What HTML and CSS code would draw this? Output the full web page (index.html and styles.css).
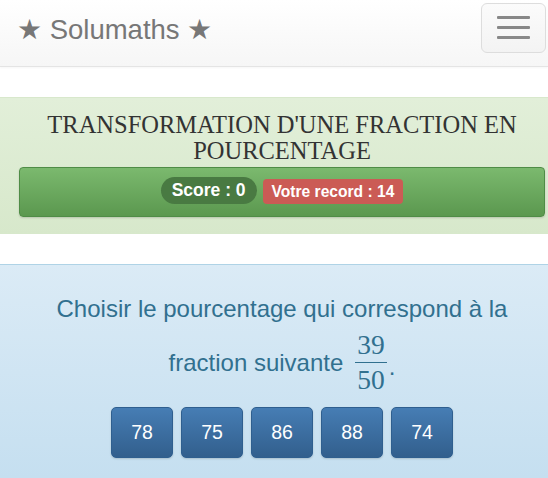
FILE: index.html
```html
<!DOCTYPE html>
<html lang="fr">
<head>
<meta charset="utf-8">
<title>Solumaths</title>
<link rel="stylesheet" href="styles.css">
</head>
<body>
<nav class="navbar">
  <span class="brand">★ Solumaths ★</span>
  <button class="toggle" type="button" aria-label="Menu">
    <span class="bar"></span><span class="bar"></span><span class="bar"></span>
  </button>
</nav>
<section class="game">
  <h1 class="title">TRANSFORMATION D'UNE FRACTION EN POURCENTAGE</h1>
  <div class="scorebar">
    <span class="score">Score : 0</span>
    <span class="record">Votre record : 14</span>
  </div>
</section>
<section class="question">
  <p class="prompt">Choisir le pourcentage qui correspond à la</p>
  <p class="prompt line2">fraction suivante <span class="frac"><span class="num">39</span><span class="den">50</span></span><span class="dot">.</span></p>
  <div class="answers">
    <button class="ans" type="button">78</button>
    <button class="ans" type="button">75</button>
    <button class="ans" type="button">86</button>
    <button class="ans" type="button">88</button>
    <button class="ans" type="button">74</button>
  </div>
</section>
</body>
</html>
```
FILE: styles.css
```css
html, body {
  margin: 0;
  padding: 0;
  height: 100%;
}
body {
  font-family: "Liberation Sans", Arial, sans-serif;
  background: #fff;
  display: flex;
  flex-direction: column;
}
.navbar {
  height: 66px;
  flex: none;
  border-bottom: 1px solid #e4e4e4;
  background: linear-gradient(#ffffff, #f6f6f6);
  display: flex;
  align-items: center;
  justify-content: space-between;
  padding: 0 2px 0 17px;
  box-shadow: 0 1px 2px rgba(0,0,0,0.04);
}
.brand {
  font-size: 27.5px;
  color: #777;
  margin-top: -7px;
}
.toggle {
  width: 65px;
  height: 50px;
  margin-top: -11px;
  border: 1px solid #ddd;
  border-radius: 6px;
  background: linear-gradient(#fbfbfb, #f3f3f3);
  display: flex;
  flex-direction: column;
  align-items: center;
  justify-content: center;
  gap: 7px;
  padding: 0;
}
.bar {
  display: block;
  width: 33px;
  height: 3px;
  border-radius: 1px;
  background: #888;
}
.game {
  flex: none;
  margin-top: 30px;
  background: linear-gradient(#e2efd9, #d7e8cb);
  border-top: 1px solid #d8e8cc;
  padding: 14px 3px 17px 19px;
}
.title {
  margin: 0 0 3px;
  font-family: "Liberation Serif", "Times New Roman", serif;
  font-weight: normal;
  font-size: 24.5px;
  line-height: 26px;
  color: #333;
  text-align: center;
  padding: 0 10px;
}
.scorebar {
  height: 48px;
  border: 1px solid #4f8c46;
  border-radius: 4px;
  background: linear-gradient(#7bb96e, #5b984f);
  box-shadow: 0 1px 2px rgba(0,0,0,0.15);
  display: flex;
  align-items: center;
  justify-content: center;
  gap: 6px;
}
.score {
  background: #497a42;
  color: #fff;
  font-weight: bold;
  font-size: 17.5px;
  line-height: 27px;
  padding: 0 11px;
  border-radius: 14px;
  margin-top: -3px;
}
.record {
  background: #cb5b55;
  color: #fff;
  font-weight: bold;
  font-size: 15.6px;
  line-height: 25px;
  padding: 0 9px;
  border-radius: 4px;
  margin-top: -2px;
}
.question {
  margin-top: 30px;
  flex: 1;
  border-top: 1px solid #afd3e6;
  background: linear-gradient(#dbebf6, #c5dff0);
  padding: 29px 3px 0 19px;
  color: #31708f;
  text-align: center;
}
.prompt {
  margin: 0;
  font-size: 24px;
  line-height: 30px;
}
.line2 {
  margin-top: 7px;
  display: flex;
  justify-content: center;
  align-items: center;
}
.frac {
  display: inline-flex;
  flex-direction: column;
  align-items: center;
  font-family: "Liberation Serif", "Times New Roman", serif;
  font-size: 27.5px;
  line-height: 28px;
  margin-left: 12px;
  margin-right: 2px;
}
.num {
  padding: 0 2px 3px;
  border-bottom: 1.5px solid #31708f;
}
.den {
  padding: 3px 2px 0;
}
.dot {
  margin-top: 8px;
}
.answers {
  margin-top: 13px;
  display: flex;
  justify-content: center;
  gap: 8px;
}
.ans {
  width: 62px;
  height: 51px;
  border: 1px solid #2f5f8f;
  border-radius: 5px;
  background: linear-gradient(#467db4, #325f8d);
  color: #fff;
  font-family: "Liberation Sans", Arial, sans-serif;
  font-size: 19.5px;
  padding: 0;
  box-shadow: 0 1px 2px rgba(0,0,0,0.15);
}
```
